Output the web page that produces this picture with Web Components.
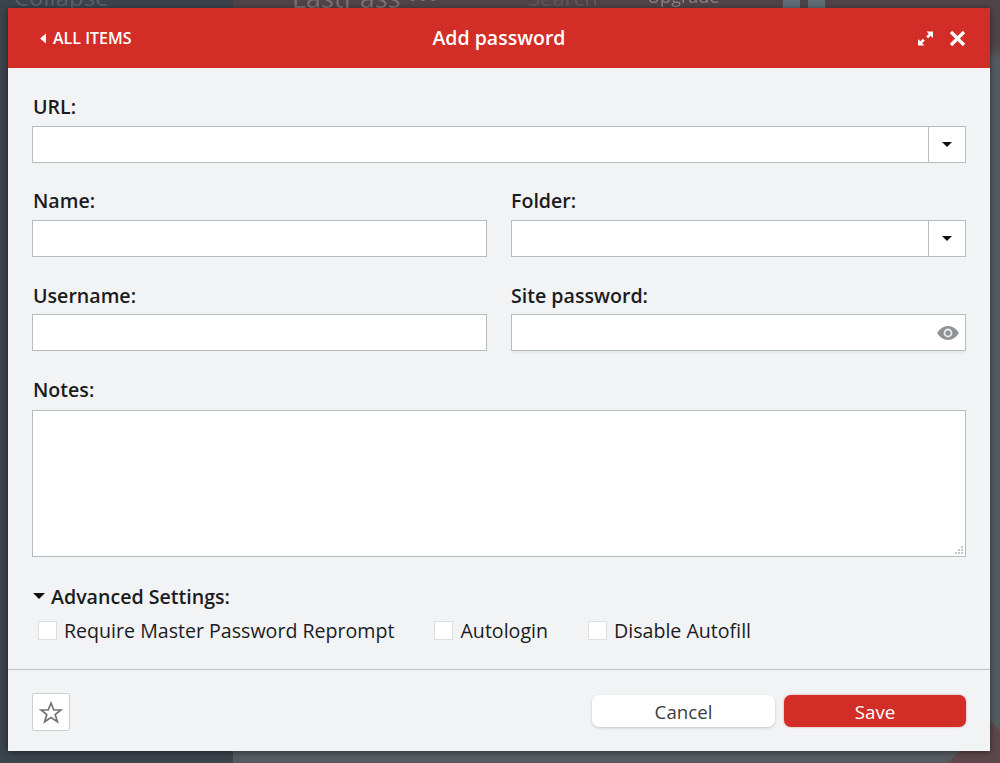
<!DOCTYPE html>
<html>
<head>
<meta charset="utf-8">
<title>Add password</title>
<style>
  html, body { margin: 0; height: 100%; }
  body { overflow: hidden; font-family: "Open Sans", sans-serif; }
  .right-col { margin-left: -1px; }
</style>
</head>
<body>
<template id="field-tpl">
  <style>
    :host { display: block; min-width: 0; }
    label {
      display: block;
      height: 23px;
      line-height: 23px;
      margin-bottom: var(--label-after, 8px);
      padding-left: 1px;
      font-size: 19.6px;
      font-weight: 600;
      color: #1b1c1e;
    }
  </style>
  <label><slot name="label"></slot></label>
  <slot></slot>
</template>

<script>
  class PageBackdrop extends HTMLElement {
    constructor() {
      super();
      this.attachShadow({mode: 'open'}).innerHTML = `
        <style>
          :host {
            display: grid;
            grid-template-columns: 233px 1fr;
            position: relative;
            width: 1000px;
            height: 763px;
            overflow: hidden;
          }
          .side { background: #3c444b; }
          .main { background: linear-gradient(#514449 0, #514449 45px, #555b60 60px); }
          .ghost {
            position: absolute;
            color: #7a7275;
            font-size: 27px;
            line-height: 30px;
            white-space: nowrap;
            filter: blur(0.6px);
          }
          .avatar {
            position: absolute;
            left: 783px;
            top: 0;
            width: 42px;
            height: 8px;
            background: linear-gradient(90deg, #5f6d77 0 40%, #4a4348 40% 60%, #5f6d77 60%);
            filter: blur(0.6px);
          }
          .corner {
            position: absolute;
            right: -20px;
            bottom: -30px;
            width: 60px;
            height: 60px;
            background: #5d474b;
            transform: rotate(45deg);
          }
          .dialog { position: absolute; left: 8px; top: 8px; }
        </style>
        <div class="side"></div>
        <div class="main"></div>
        <div class="corner"></div>
        <div class="avatar"></div>
        <div class="ghost" style="left:14px;top:-18px;font-size:24px;color:#59616a">Collapse</div>
        <div class="ghost" style="left:292px;top:-17px">LastPass •••</div>
        <div class="ghost" style="left:528px;top:-18px;font-size:22px;color:#63585c">Search</div>
        <div class="ghost" style="left:647px;top:-19px;font-size:18px;color:#8a8486">Upgrade</div>
        <div class="ghost" style="left:12px;top:755px;font-size:20px;color:#555d64">Menu Settings</div>
        <div class="dialog"><slot></slot></div>
      `;
    }
  }

  class PwDialog extends HTMLElement {
    constructor() {
      super();
      this.attachShadow({mode: 'open'}).innerHTML = `
        <style>
          :host {
            display: flex;
            flex-direction: column;
            width: 982px;
            height: 743px;
            background: #f2f3f5;
            box-shadow: 0 1px 6px rgba(0, 0, 0, 0.5);
          }
          header {
            display: grid;
            grid-template-columns: 1fr auto 1fr;
            align-items: center;
            height: 60px;
            padding: 0 24px;
            background: #d32d27;
            color: #fff;
          }
          .back {
            display: flex;
            align-items: center;
            gap: 6px;
            margin-left: 7px;
            font-size: 16px;
            font-weight: 600;
          }
          h1 { margin: -1px 0 0; font-size: 19.5px; font-weight: 600; }
          .tools { display: flex; justify-content: flex-end; align-items: center; gap: 15px; }
          svg { display: block; }
          .body {
            flex: 1;
            display: flex;
            flex-direction: column;
            padding: 27px 24px 0;
          }
          footer {
            display: flex;
            align-items: center;
            justify-content: space-between;
            height: 82px;
            padding: 3px 24px 0;
            border-top: 1px solid #bfc1c3;
            box-sizing: border-box;
          }
          .actions { display: flex; gap: 9px; margin-top: -2px; }
        </style>
        <header>
          <div class="back">
            <svg width="8" height="11" viewBox="0 0 8 11"><path d="M7 0.5v10L1 5.5z" fill="#fff"/></svg>
            <span>ALL ITEMS</span>
          </div>
          <h1>Add password</h1>
          <div class="tools">
            <svg width="17" height="17" viewBox="0 0 17 17" fill="#fff">
              <path d="M9.5 1.5h6.5v6.5l-2.3-2.3-2.6 2.6-1.9-1.9 2.6-2.6z"/>
              <path d="M7.5 15.5H1V9l2.300 2.300 2.600-2.600 1.900 1.900-2.600 2.600z"/>
            </svg>
            <svg width="17" height="17" viewBox="0 0 17 17"><path d="M2 2l13 13M15 2L2 15" stroke="#fff" stroke-width="3.2" fill="none"/></svg>
          </div>
        </header>
        <div class="body"><slot></slot></div>
        <footer>
          <slot name="star"></slot>
          <div class="actions"><slot name="actions"></slot></div>
        </footer>
      `;
    }
  }

  class PwField extends HTMLElement {
    constructor() {
      super();
      const tpl = document.getElementById('field-tpl');
      this.attachShadow({mode: 'open'}).appendChild(tpl.content.cloneNode(true));
    }
  }

  class PwInput extends HTMLElement {
    constructor() {
      super();
      this.attachShadow({mode: 'open'}).innerHTML = `
        <style>
          :host {
            display: flex;
            box-sizing: border-box;
            height: 37px;
            background: #fff;
            border: 1px solid #b4bcc0;
          }
          .fill { flex: 1; }
          .drop {
            display: none;
            width: 36px;
            border-left: 1px solid #b4bcc0;
            align-items: center;
            justify-content: center;
          }
          .eye {
            display: none;
            width: 34px;
            align-items: center;
            justify-content: center;
          }
          :host([kind="select"]) .drop { display: flex; }
          :host([kind="password"]) .eye { display: flex; }
          :host([kind="password"]) { box-shadow: 0 3px 2px -1px #e6e7e9; }
        </style>
        <div class="fill"></div>
        <div class="drop">
          <svg width="10" height="5" viewBox="0 0 10 5"><path d="M0 0h10L5 5z" fill="#111"/></svg>
        </div>
        <div class="eye">
          <svg width="24" height="16" viewBox="0 0 24 16">
            <path d="M1 8C4 3.400 7.800 1 12 1s8 2.400 11 7c-3 4.600-6.800 7-11 7S4 12.600 1 8z" fill="#8f9295"/>
            <circle cx="12" cy="8" r="4.400" fill="#eceded"/>
            <circle cx="12" cy="8" r="2.600" fill="#8f9295"/>
          </svg>
        </div>
      `;
    }
  }

  class PwTextarea extends HTMLElement {
    constructor() {
      super();
      this.attachShadow({mode: 'open'}).innerHTML = `
        <style>
          :host {
            display: block;
            position: relative;
            box-sizing: border-box;
            height: 147px;
            background: #fff;
            border: 1px solid #b4bcc0;
          }
          svg { position: absolute; right: 1px; bottom: 1px; }
        </style>
        <svg width="9" height="9" viewBox="0 0 9 9" fill="#c6c8ca">
          <rect x="6" y="0" width="2" height="2"/>
          <rect x="3" y="3" width="2" height="2"/><rect x="6" y="3" width="2" height="2"/>
          <rect x="0" y="6" width="2" height="2"/><rect x="3" y="6" width="2" height="2"/><rect x="6" y="6" width="2" height="2"/>
        </svg>
      `;
    }
  }

  class PwCheck extends HTMLElement {
    constructor() {
      super();
      this.attachShadow({mode: 'open'}).innerHTML = `
        <style>
          :host {
            display: inline-flex;
            align-items: center;
            gap: 7px;
            font-size: 19.6px;
            color: #1b1c1e;
          }
          i {
            display: block;
            box-sizing: border-box;
            width: 19px;
            height: 19px;
            background: #fff;
            border: 1px solid #dcdee0;
          }
        </style>
        <i></i><span><slot></slot></span>
      `;
    }
  }

  class PwButton extends HTMLElement {
    constructor() {
      super();
      this.attachShadow({mode: 'open'}).innerHTML = `
        <style>
          :host {
            display: flex;
            align-items: center;
            justify-content: center;
            box-sizing: border-box;
            width: 183px;
            height: 32px;
            border-radius: 7px;
            background: #fff;
            color: #3b3d3f;
            font-size: 18.7px;
            box-shadow: 0 1px 3px rgba(0, 0, 0, 0.2);
          }
          :host([primary]) {
            width: 182px;
            background: #d32d27;
            color: #fff;
            box-shadow: 0 0 2px rgba(211, 45, 39, 0.6);
          }
        </style>
        <slot></slot>
      `;
    }
  }

  class PwStar extends HTMLElement {
    constructor() {
      super();
      this.attachShadow({mode: 'open'}).innerHTML = `
        <style>
          :host {
            display: flex;
            align-items: center;
            justify-content: center;
            box-sizing: border-box;
            width: 38px;
            height: 38px;
            background: #fff;
            border: 1px solid #cdd0d2;
            border-radius: 2px;
          }
        </style>
        <svg width="24" height="23" viewBox="0 0 24 23"><path d="M12 2l2.800 7h7.200l-5.800 4.500 2.200 7.300L12 16.500 5.600 20.800l2.200-7.300L2 9h7.200z" fill="none" stroke="#6f7478" stroke-width="1.700"/></svg>
      `;
    }
  }

  class PwAdvanced extends HTMLElement {
    constructor() {
      super();
      this.attachShadow({mode: 'open'}).innerHTML = `
        <style>
          :host { display: block; }
          .head {
            display: flex;
            align-items: center;
            gap: 6px;
            height: 24px;
            padding-left: 1px;
            font-size: 19.6px;
            font-weight: 600;
            color: #1b1c1e;
          }
          .row { display: flex; gap: 40px; margin-top: 9px; padding-left: 6px; align-items: center; }
          svg { display: block; }
        </style>
        <div class="head">
          <svg width="12" height="6" viewBox="0 0 12 6"><path d="M0 0h12L6 6z" fill="#111"/></svg>
          <span><slot name="title"></slot></span>
        </div>
        <div class="row"><slot></slot></div>
      `;
    }
  }

  class PwRow extends HTMLElement {
    constructor() {
      super();
      this.attachShadow({mode: 'open'}).innerHTML = `
        <style>
          :host { display: grid; grid-template-columns: 455px 455px; gap: 24px; margin-top: 26px; }
        </style>
        <slot></slot>
      `;
    }
  }

  customElements.define('page-backdrop', PageBackdrop);
  customElements.define('pw-dialog', PwDialog);
  customElements.define('pw-field', PwField);
  customElements.define('pw-input', PwInput);
  customElements.define('pw-textarea', PwTextarea);
  customElements.define('pw-check', PwCheck);
  customElements.define('pw-button', PwButton);
  customElements.define('pw-star', PwStar);
  customElements.define('pw-advanced', PwAdvanced);
  customElements.define('pw-row', PwRow);
</script>

<page-backdrop>
  <pw-dialog>
    <pw-field>
      <span slot="label">URL:</span>
      <pw-input kind="select"></pw-input>
    </pw-field>
    <pw-row>
      <pw-field><span slot="label">Name:</span><pw-input></pw-input></pw-field>
      <pw-field><span slot="label" class="right-col">Folder:</span><pw-input kind="select"></pw-input></pw-field>
    </pw-row>
    <pw-row style="margin-top:27px;--label-after:7px">
      <pw-field><span slot="label">Username:</span><pw-input></pw-input></pw-field>
      <pw-field><span slot="label" class="right-col">Site password:</span><pw-input kind="password"></pw-input></pw-field>
    </pw-row>
    <pw-field style="margin-top:27px;--label-after:9px">
      <span slot="label">Notes:</span>
      <pw-textarea></pw-textarea>
    </pw-field>
    <pw-advanced style="margin-top:27px">
      <span slot="title">Advanced Settings:</span>
      <pw-check>Require Master Password Reprompt</pw-check>
      <pw-check>Autologin</pw-check>
      <pw-check>Disable Autofill</pw-check>
    </pw-advanced>
    <pw-star slot="star"></pw-star>
    <pw-button slot="actions">Cancel</pw-button>
    <pw-button slot="actions" primary>Save</pw-button>
  </pw-dialog>
</page-backdrop>
</body>
</html>
